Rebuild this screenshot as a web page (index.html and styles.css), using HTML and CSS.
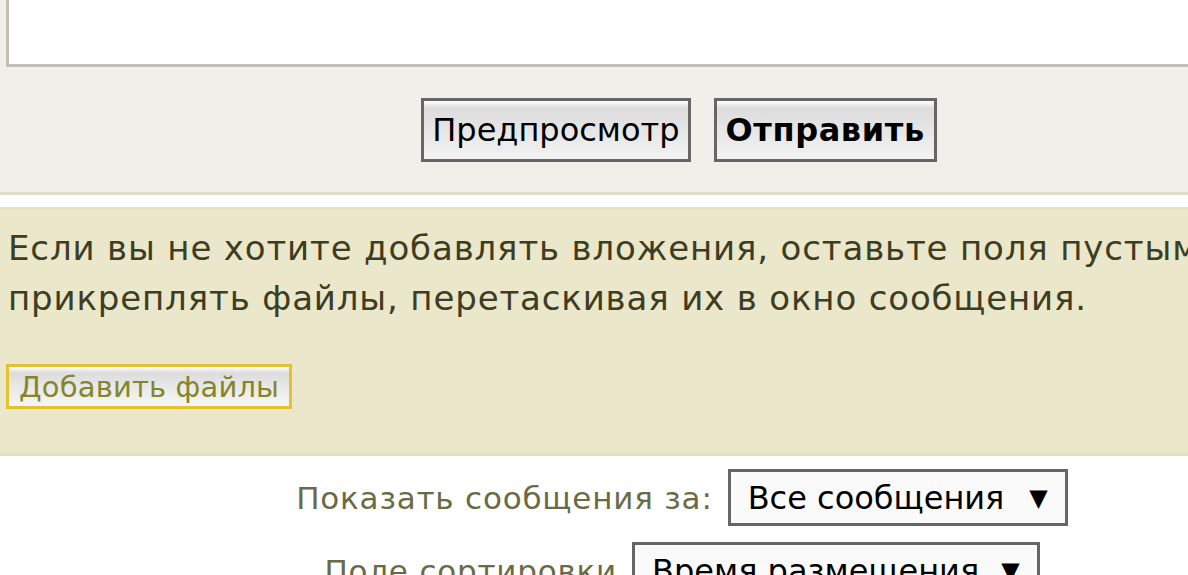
FILE: index.html
```html
<!DOCTYPE html>
<html lang="ru">
<head>
<meta charset="utf-8">
<title>Ответ</title>
<link rel="stylesheet" href="styles.css">
</head>
<body>
<div class="page">
  <div class="post-panel">
    <div class="editor">
      <textarea class="message" aria-label="Сообщение"></textarea>
    </div>
    <div class="submit-buttons">
      <button class="btn" type="button">Предпросмотр</button>
      <button class="btn btn-primary" type="button">Отправить</button>
    </div>
  </div>
  <div class="attach-panel">
    <p class="attach-info">Если вы не хотите добавлять вложения, оставьте поля пустыми. Вы также можете<br>прикреплять файлы, перетаскивая их в окно сообщения.</p>
    <button class="btn-add" type="button">Добавить файлы</button>
  </div>
  <div class="sort-options">
    <div class="sort-row">
      <label class="sort-label">Показать сообщения за:</label>
      <div class="select"><span>Все сообщения</span><span class="arrow">▼</span></div>
    </div>
    <div class="sort-row">
      <label class="sort-label">Поле сортировки</label>
      <div class="select select-sort"><span>Время размещения</span><span class="arrow">▼</span></div>
    </div>
  </div>
</div>
</body>
</html>
```
FILE: styles.css
```css
html, body {
  margin: 0;
  padding: 0;
  background: #ffffff;
  overflow: hidden;
}
body {
  font-family: "DejaVu Sans", Verdana, sans-serif;
  color: #3c3c22;
}
.page {
  width: 1358px;
}
.post-panel {
  background: #f0efe9;
  border-bottom: 3px solid #e2dfc6;
  height: 192px;
  box-sizing: content-box;
}
.editor {
  padding-left: 6px;
}
.message {
  display: block;
  width: 1400px;
  height: 64px;
  margin: 0;
  padding: 0;
  border: 3px solid #c0c0b6;
  border-top: 0;
  border-right: 0;
  background: #ffffff;
  resize: none;
  box-sizing: content-box;
}
.submit-buttons {
  margin-top: 31px;
  display: flex;
  justify-content: center;
  gap: 23px;
}
.btn {
  font-family: "DejaVu Sans", Verdana, sans-serif;
  font-size: 32px;
  color: #000000;
  height: 64px;
  padding: 0 8px;
  border: 3px solid #666666;
  border-radius: 0;
  background: linear-gradient(#ffffff 0%, #dcdcdc 12%, #e6e6e6 50%, #f2f2f2 100%);
  box-sizing: border-box;
}
.btn-primary {
  font-weight: bold;
  letter-spacing: 0.6px;
  padding: 0 9px;
}
.attach-panel {
  margin-top: 12px;
  background: #ebe7ca;
  border-top: 2px solid #e2dfc4;
  border-bottom: 3px solid #e2dfc4;
  padding: 14px 0 0 8px;
  height: 230px;
  box-sizing: content-box;
}
.attach-info {
  margin: 0;
  font-size: 34px;
  line-height: 50px;
  letter-spacing: 0.85px;
  white-space: nowrap;
  color: #3d3d23;
}
.btn-add {
  margin-top: 41px;
  margin-left: -2px;
  font-family: "DejaVu Sans", Verdana, sans-serif;
  font-size: 29px;
  letter-spacing: 0.15px;
  color: #868629;
  height: 45px;
  padding: 0 10px;
  border: 3px solid #e2c230;
  border-radius: 0;
  background: linear-gradient(#ffffff 0%, #dcdcdc 15%, #e8e8e8 50%, #f6f6f6 100%);
  box-sizing: border-box;
}
.sort-options {
  padding-top: 13px;
  padding-left: 6px;
  display: flex;
  flex-direction: column;
  align-items: center;
  gap: 16px;
}
.sort-row {
  display: flex;
  align-items: center;
  gap: 15px;
}
.sort-label {
  font-size: 31px;
  letter-spacing: 0.8px;
  color: #6a6a47;
}
.select {
  display: flex;
  align-items: center;
  justify-content: space-between;
  gap: 25px;
  height: 57px;
  padding: 0 17px;
  border: 3px solid #666666;
  background: #fafafa;
  font-size: 32px;
  color: #000000;
  box-sizing: border-box;
}
.select-sort {
  gap: 22px;
}
.select .arrow {
  font-size: 24px;
}
```
